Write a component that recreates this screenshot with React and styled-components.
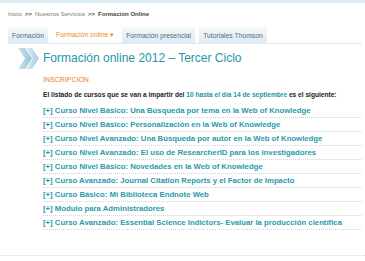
import React from 'react'
import styled, { createGlobalStyle } from 'styled-components'

const Global = createGlobalStyle`
  body {
    margin: 0;
    background: #fff;
    font-family: "Liberation Sans", Arial, sans-serif;
  }
`

const Page = styled.div`
  width: 365px;
  height: 261px;
  overflow: hidden;
  border-top: 3px solid #dcebf3;
  box-sizing: border-box;
`

const Crumbs = styled.div`
  padding: 8px 0 0 8px;
  height: 14px;
  font-size: 6px;
  color: #7a7a7a;
  b {
    color: #444;
  }
  span {
    margin: 0 3px;
    color: #555;
    font-weight: bold;
  }
`

const Tabs = styled.div`
  display: flex;
  gap: 4px;
  margin: 2px 3px 0 8px;
  height: 16px;
  border-bottom: 1px solid #dfe9ee;
`

const Tab = styled.div`
  display: flex;
  align-items: center;
  padding: 0 4px;
  font-size: 6.8px;
  color: ${({ active }) => (active ? '#f08a24' : '#5d6a72')};
  background: ${({ active }) =>
    active ? '#fff' : 'linear-gradient(#f3f8fb, #dcebf4)'};
`

const Heading = styled.div`
  display: flex;
  align-items: center;
  gap: 3px;
  padding: 3px 0 0 18px;
  height: 22px;
  h1 {
    margin: 0;
    font-weight: normal;
    font-size: 12px;
    color: #2596a5;
  }
`

const Body = styled.div`
  padding: 7px 3px 0 43px;
`

const Label = styled.div`
  font-size: 7px;
  color: #e8821e;
  height: 10px;
`

const Intro = styled.p`
  margin: 5px 0 7px;
  font-size: 6.6px;
  font-weight: bold;
  color: #222;
  span {
    color: #2596a5;
  }
`

const Course = styled.a`
  display: block;
  height: 12px;
  line-height: 12px;
  margin-bottom: 1px;
  font-size: 7.75px;
  font-weight: bold;
  color: #2a9aaa;
  text-decoration: none;
  border-bottom: 1px dotted #cfd4d7;
`

const Footer = styled.div`
  margin-top: 25px;
  border-bottom: 1px dotted #d5dadd;
`

const courses = [
  'Curso Nivel Básico: Una Búsqueda por tema en la Web of Knowledge',
  'Curso Nivel Básico: Personalización en la Web of Knowledge',
  'Curso Nivel Avanzado: Una Búsqueda por autor en la Web of Knowledge',
  'Curso Nivel Avanzado: El uso de ResearcherID para los investigadores',
  'Curso Nivel Básico: Novedades en la Web of Knowledge',
  'Curso Avanzado: Journal Citation Reports y el Factor de Impacto',
  'Curso Básico: Mi Biblioteca Endnote Web',
  'Modulo para Administradores',
  'Curso Avanzado: Essential Science Indictors- Evaluar la producción científica',
]

const Chevrons = () => (
  <svg width="22" height="21" viewBox="0 0 22 21">
    <defs>
      <linearGradient id="cv" x1="0" y1="0" x2="1" y2="0">
        <stop offset="0" stopColor="#cfe4ef" />
        <stop offset="1" stopColor="#8fc3db" />
      </linearGradient>
    </defs>
    <polygon points="0,0 7,0 14,10.5 7,21 0,21 7,10.5" fill="url(#cv)" />
    <polygon points="8,0 14,0 21,10.5 14,21 8,21 15,10.5" fill="url(#cv)" opacity="0.8" />
  </svg>
)

export default function App() {
  return (
    <Page>
      <Global />
      <Crumbs>
        Inicio<span>&gt;&gt;</span>Nuestros Servicios<span>&gt;&gt;</span>
        <b>Formación Online</b>
      </Crumbs>
      <Tabs>
        <Tab>Formación</Tab>
        <Tab active>Formación online ▾</Tab>
        <Tab>Formación presencial</Tab>
        <Tab>Tutoriales Thomson</Tab>
      </Tabs>
      <Heading>
        <Chevrons />
        <h1>Formación online 2012 – Tercer Ciclo</h1>
      </Heading>
      <Body>
        <Label>INSCRIPCION</Label>
        <Intro>
          El listado de cursos que se van a impartir del{' '}
          <span>10 hasta el día 14 de septiembre</span> es el siguiente:
        </Intro>
        {courses.map((c) => (
          <Course key={c} href="#">
            [+] {c}
          </Course>
        ))}
      </Body>
      <Footer />
    </Page>
  )
}
